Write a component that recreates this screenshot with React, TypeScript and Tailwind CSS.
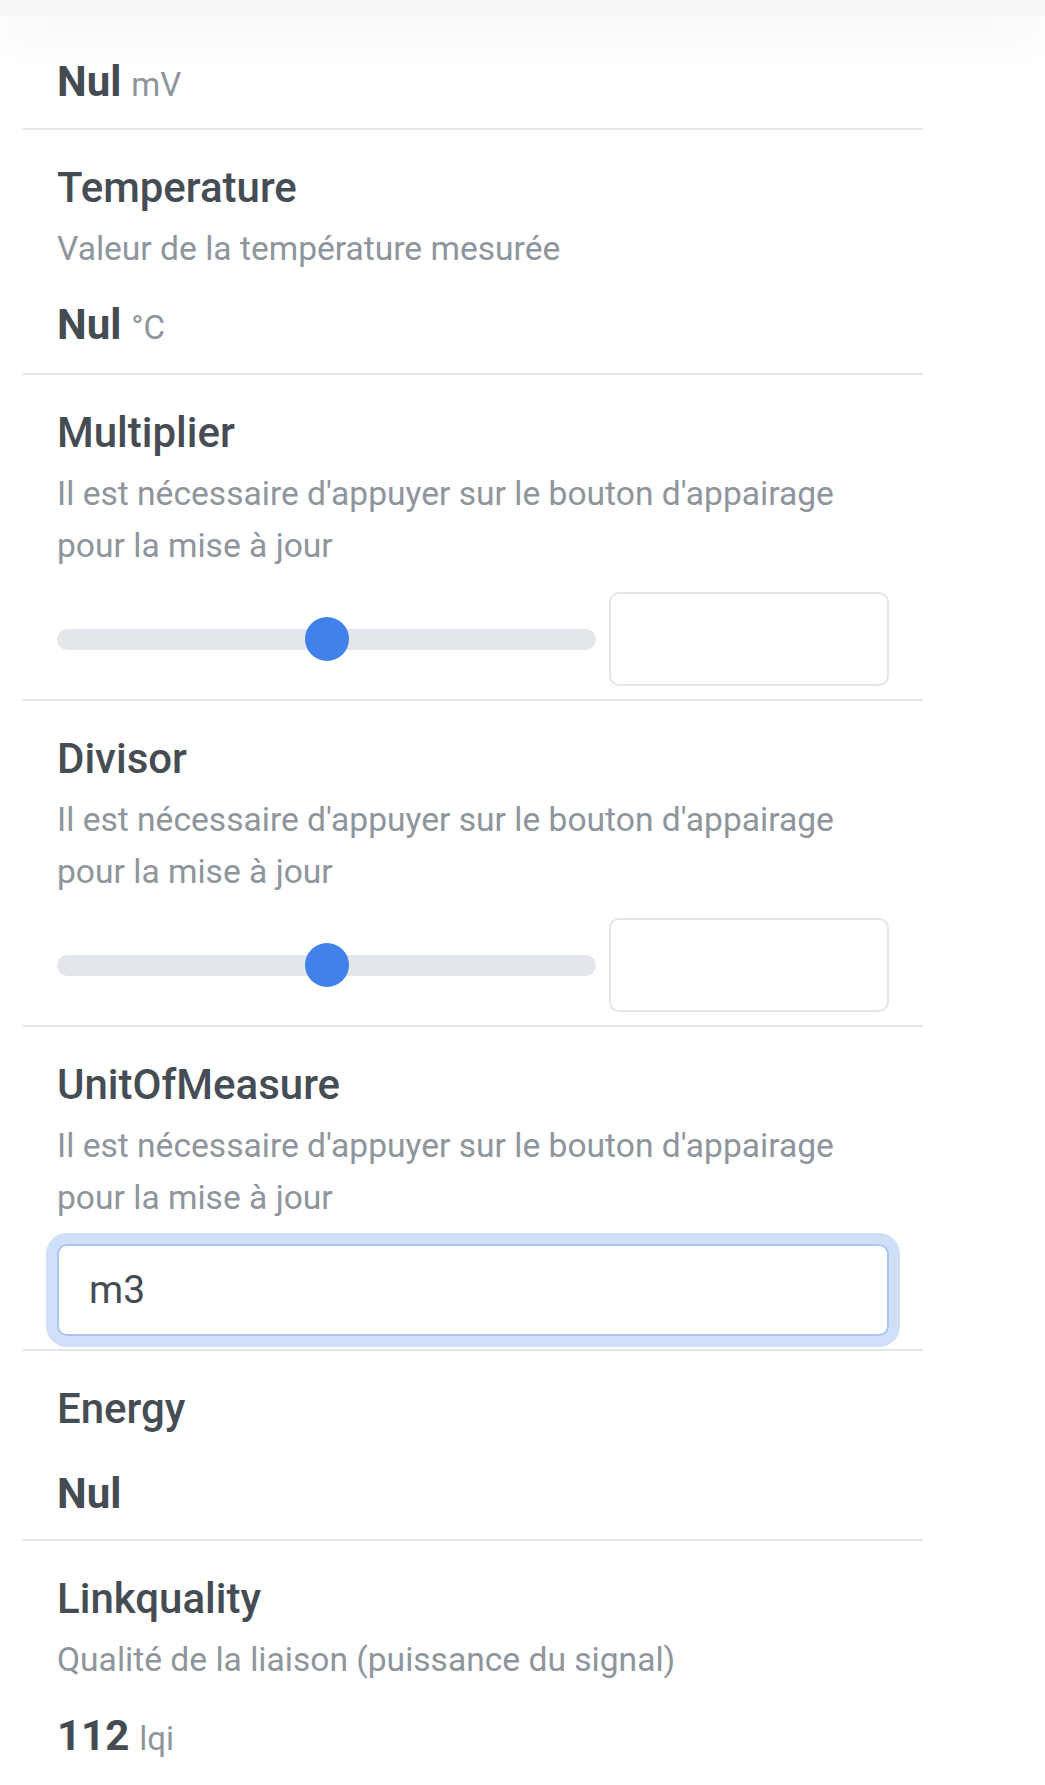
import React from "react";

type Item = {
    title?: string;
    desc?: string;
    value?: string;
    unit?: string;
    control?: "slider" | "text";
    last?: boolean;
};

const items: Item[] = [
    { value: "Nul", unit: "mV" },
    { title: "Temperature", desc: "Valeur de la température mesurée", value: "Nul", unit: "°C" },
    { title: "Multiplier", desc: "Il est nécessaire d'appuyer sur le bouton d'appairage pour la mise à jour", control: "slider" },
    { title: "Divisor", desc: "Il est nécessaire d'appuyer sur le bouton d'appairage pour la mise à jour", control: "slider" },
    { title: "UnitOfMeasure", desc: "Il est nécessaire d'appuyer sur le bouton d'appairage pour la mise à jour", control: "text" },
    { title: "Energy", value: "Nul" },
    { title: "Linkquality", desc: "Qualité de la liaison (puissance du signal)", value: "112", unit: "lqi", last: true },
];

function Slider() {
    return (
        <div className="mt-[20px] flex items-center gap-[13px]">
            <div className="relative h-[21px] flex-1 rounded-full bg-[#e3e7ec]">
                {/* pouce du curseur */}
                <div className="absolute left-1/2 top-1/2 h-[44px] w-[44px] -translate-x-1/2 -translate-y-1/2 rounded-full bg-[#4081ea]" />
            </div>
            <div className="h-[94px] w-[280px] rounded-[10px] border-2 border-[#e1e6ea] bg-white" />
        </div>
    );
}

function TextField() {
    return (
        <div className="mt-[20px]">
            <input
                defaultValue="m3"
                className="h-[92px] w-full rounded-[10px] border-2 border-[#a9c6f2] bg-white pl-[30px] text-[39px] text-[#454b53] shadow-[0_0_0_11px_#cfdff8] outline-none"
            />
        </div>
    );
}

function Row({ item, first }: { item: Item; first: boolean }) {
    const pad = first ? "pt-[38px] pb-[15px]" : "pt-[30px]";
    const bottom = first ? "" : item.control ? "pb-[13px]" : item.last ? "pb-[36px]" : "pb-[17px]";
    return (
        <div className={`${pad} ${bottom} px-[34px] border-b-2 ${item.last ? "border-[#eef1f3]" : "border-[#e2e7eb]"}`}>
            {item.title && (
                <div className="text-[42px] leading-[56px] font-medium text-[#464c54]">{item.title}</div>
            )}
            {item.desc && (
                <div className="mt-[7px] text-[33.6px] leading-[52px] text-[#8e959c]">{item.desc}</div>
            )}
            {item.value && (
                <div className={`${item.title ? (item.desc ? "mt-[22px]" : "mt-[29px]") : ""} text-[42px] leading-[56px] font-bold text-[#454b53]`}>
                    {item.value}
                    {item.unit && (
                        <span className="ml-[10px] text-[33px] font-normal text-[#8e959c]">{item.unit}</span>
                    )}
                </div>
            )}
            {item.control === "slider" && <Slider />}
            {item.control === "text" && <TextField />}
        </div>
    );
}

export default function App() {
    return (
        <div className="min-h-screen overflow-hidden bg-white font-['Roboto','Liberation_Sans',sans-serif]">
            {/* bas de l'en-tête */}
            <div className="relative z-10 h-[16px] bg-[#f7f8fa] shadow-[0_16px_44px_rgba(0,0,0,0.07)]" />
            <div className="ml-[23px] w-[900px]">
                {items.map((item, i) => (
                    <Row key={i} item={item} first={i === 0} />
                ))}
            </div>
        </div>
    );
}
